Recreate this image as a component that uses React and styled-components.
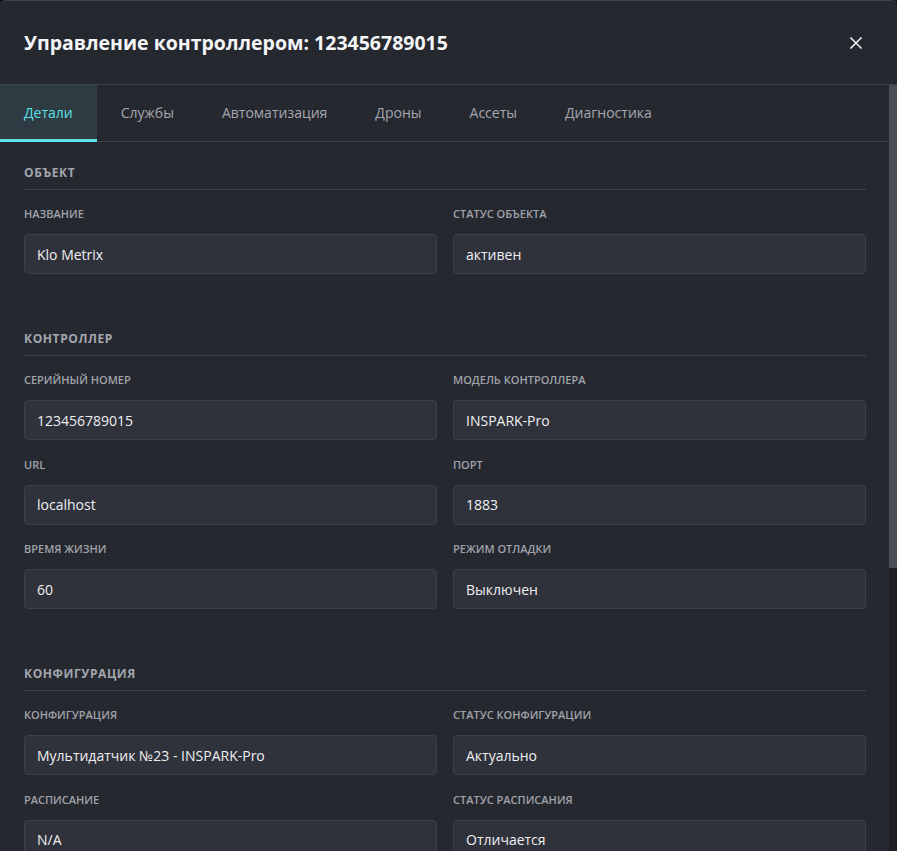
import React from "react";
import styled, { createGlobalStyle } from "styled-components";

const Global = createGlobalStyle`
  * { box-sizing: border-box; }
  html, body { margin: 0; padding: 0; background: #17181d; }
  body { font-family: "Open Sans", "Noto Sans", sans-serif; }
`;

const Modal = styled.div`
  width: 897px;
  height: 851px;
  background: #262830;
  border-top: 1px solid #3f424b;
  border-radius: 6px 6px 0 0;
  display: flex;
  flex-direction: column;
  overflow: hidden;
`;

const Header = styled.div`
  height: 84px;
  flex: 0 0 auto;
  display: flex;
  align-items: center;
  justify-content: space-between;
  padding: 0 24px;
  border-bottom: 1px solid #3c3f48;
`;

const Title = styled.h2`
  margin: 0;
  font-size: 19.5px;
  font-weight: 700;
  color: #f4f5f7;
  line-height: 1;
`;

const Close = styled.button`
  background: none;
  border: 0;
  padding: 0;
  color: #e6e7ea;
  display: flex;
  margin-right: 11px;
  cursor: pointer;
`;

const Body = styled.div`
  flex: 1 1 auto;
  display: flex;
  min-height: 0;
`;

const Scroller = styled.div`
  flex: 1 1 auto;
  overflow: hidden;
  min-width: 0;
`;

const Track = styled.div`
  flex: 0 0 8px;
  background: #1e2026;
  display: flex;
  flex-direction: column;
`;

const Thumb = styled.div`
  height: ${(p) => p.$size}px;
  background: #4a4d56;
`;

const Tabs = styled.div`
  display: flex;
  height: 57px;
  border-bottom: 1px solid #3c3f48;
  background: #262830;
`;

const Tab = styled.div`
  padding: 1px 24px 0;
  display: flex;
  align-items: center;
  font-size: 14px;
  color: ${(p) => (p.$active ? "#5fe0ea" : "#a4a7ae")};
  background: ${(p) => (p.$active ? "#2e3b43" : "transparent")};
  border-bottom: 3px solid ${(p) => (p.$active ? "#5fe0ea" : "transparent")};
  margin-bottom: -1px;
`;

const Content = styled.div`
  padding: 23px 23px 120px 24px;
  display: flex;
  flex-direction: column;
  gap: 57px;
`;

const Section = styled.section`
  display: flex;
  flex-direction: column;
`;

const SectionTitle = styled.h3`
  margin: 0;
  font-size: 12px;
  line-height: 16px;
  font-weight: 700;
  letter-spacing: 0.6px;
  color: #a3a6ad;
  padding-bottom: 8px;
  border-bottom: 1px solid #3f424b;
  margin-bottom: 16px;
`;

const Grid = styled.div`
  display: grid;
  grid-template-columns: 1fr 1fr;
  column-gap: 16px;
  row-gap: 16.5px;
`;

const Field = styled.div`
  display: flex;
  flex-direction: column;
`;

const Label = styled.div`
  font-size: 11px;
  line-height: 16px;
  font-weight: 600;
  color: #a0a3aa;
  margin-bottom: 12px;
`;

const Value = styled.div`
  height: 40px;
  border: 1px solid #3d4049;
  border-radius: 4px;
  background: #30323b;
  display: flex;
  align-items: center;
  padding: 0 12px;
  font-size: 14px;
  color: #eeeff1;
`;

const sections = [
  {
    title: "ОБЪЕКТ",
    fields: [
      ["НАЗВАНИЕ", "Klo Metrix"],
      ["СТАТУС ОБЪЕКТА", "активен"],
    ],
  },
  {
    title: "КОНТРОЛЛЕР",
    fields: [
      ["СЕРИЙНЫЙ НОМЕР", "123456789015"],
      ["МОДЕЛЬ КОНТРОЛЛЕРА", "INSPARK-Pro"],
      ["URL", "localhost"],
      ["ПОРТ", "1883"],
      ["ВРЕМЯ ЖИЗНИ", "60"],
      ["РЕЖИМ ОТЛАДКИ", "Выключен"],
    ],
  },
  {
    title: "КОНФИГУРАЦИЯ",
    fields: [
      ["КОНФИГУРАЦИЯ", "Мультидатчик №23 - INSPARK-Pro"],
      ["СТАТУС КОНФИГУРАЦИИ", "Актуально"],
      ["РАСПИСАНИЕ", "N/A"],
      ["СТАТУС РАСПИСАНИЯ", "Отличается"],
      ["ВЕРСИЯ ПРОШИВКИ", "N/A"],
      ["ПОСЛЕДНЕЕ ОБНОВЛЕНИЕ", "N/A"],
    ],
  },
];

const tabs = ["Детали", "Службы", "Автоматизация", "Дроны", "Ассеты", "Диагностика"];

export default function App() {
  return (
    <>
      <Global />
      <Modal>
        <Header>
          <Title>Управление контроллером: 123456789015</Title>
          <Close aria-label="close">
            <svg width="12" height="12" viewBox="0 0 12 12" fill="none" stroke="currentColor" strokeWidth="1.6" strokeLinecap="square">
              <path d="M1 1 L11 11 M11 1 L1 11" />
            </svg>
          </Close>
        </Header>
        <Body>
          <Scroller>
            <Tabs>
              {tabs.map((t, i) => (
                <Tab key={t} $active={i === 0}>{t}</Tab>
              ))}
            </Tabs>
            <Content>
              {sections.map((s) => (
                <Section key={s.title}>
                  <SectionTitle>{s.title}</SectionTitle>
                  <Grid>
                    {s.fields.map(([l, v]) => (
                      <Field key={l}>
                        <Label>{l}</Label>
                        <Value>{v}</Value>
                      </Field>
                    ))}
                  </Grid>
                </Section>
              ))}
            </Content>
          </Scroller>
          <Track>
            <Thumb $size={483} />
          </Track>
        </Body>
      </Modal>
    </>
  );
}
